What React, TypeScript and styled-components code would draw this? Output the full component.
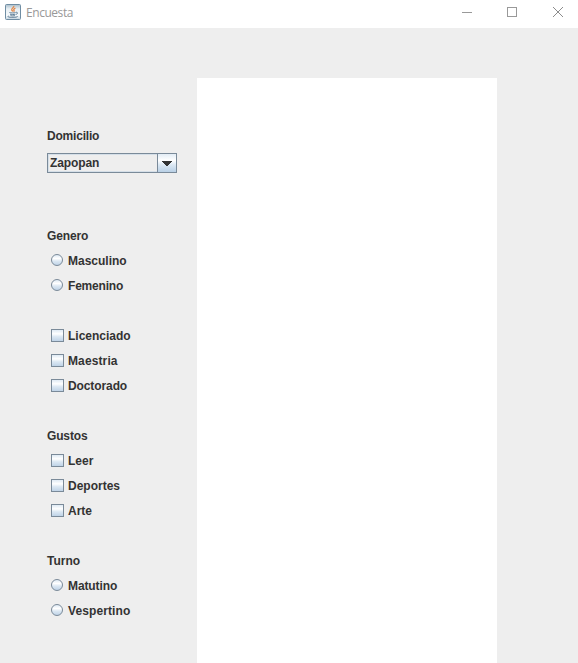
import React from "react";
import styled, { createGlobalStyle } from "styled-components";

const GlobalStyle = createGlobalStyle`
  * { box-sizing: border-box; }
  body { margin: 0; overflow: hidden; background: #eeeeee; }
`;

const Window = styled.div`
  display: flex;
  flex-direction: column;
  width: 578px;
  height: 663px;
  overflow: hidden;
  background: #eeeeee;
  color: #333333;
  font: bold 12px/27px "Liberation Sans", Arial, sans-serif;
`;

const TitleBar = styled.header`
  display: flex;
  flex: none;
  height: 28px;
  padding-left: 5px;
  background: #ffffff;
`;

const Title = styled.h1`
  flex: 1;
  margin: 0 0 0 5px;
  color: #999999;
  font: 400 12px/26px "Open Sans", "Noto Sans", sans-serif;
  letter-spacing: -0.45px;
`;

const AppIcon = styled.svg`
  flex: none;
  width: 16px;
  height: 16px;
  margin-top: 4px;
`;

const Controls = styled.div`
  display: flex;
  gap: 33px;
  padding-right: 14px;
`;

const ControlButton = styled.button`
  display: flex;
  width: 12px;
  height: 28px;
  padding: 6px 0 0;
  border: 0;
  background: none;

  &:last-child {
    margin-left: 1px;
  }
`;

const Content = styled.main`
  display: flex;
  flex: 1;
  min-height: 0;
`;

const Form = styled.form`
  display: flex;
  flex-direction: column;
  gap: 25px;
  width: 197px;
  padding: 95px 20px 0 47px;
`;

const Group = styled.section<{ $height?: number }>`
  height: ${({ $height }) => ($height ? `${$height}px` : "auto")};
`;

const Heading = styled.div<{ $tracking?: number }>`
  height: 25px;
  letter-spacing: ${({ $tracking = 0 }) => $tracking}px;
`;

const Combo = styled.div`
  display: flex;
  width: 130px;
  height: 20px;
  margin-top: 5px;
  border: 1px solid #7a8a99;
`;

const ComboValue = styled.div`
  flex: 1;
  padding-left: 1px;
  border: 1px solid #d5dfe8;
  border-right: 0;
  line-height: 17px;
  letter-spacing: -0.12px;
`;

const ComboArrow = styled.div`
  display: flex;
  width: 19px;
  padding: 7px 0 0 4px;
  border-left: 1px solid #7a8a99;
  background: linear-gradient(#e2ecf5, #ffffff 35%, #dce8f3 60%, #b8cfe5);
`;

const Option = styled.label`
  display: flex;
  height: 25px;
  padding-left: 4px;
`;

const OptionText = styled.span<{ $tracking?: number }>`
  letter-spacing: ${({ $tracking = 0 }) => $tracking}px;
`;

const Mark = styled.span<{ $round?: boolean }>`
  flex: none;
  width: ${({ $round }) => ($round ? 12 : 13)}px;
  height: ${({ $round }) => ($round ? 12 : 13)}px;
  margin: 6px ${({ $round }) => ($round ? 5 : 4)}px 0 0;
  border: 1px solid #7a8a99;
  border-radius: ${({ $round }) => ($round ? "50%" : "0")};
  background: linear-gradient(#dfeaf4, #ffffff 35%, #dce8f3 60%, #bfd3e7);
`;

const OutputPanel = styled.section`
  width: 300px;
  margin-top: 50px;
  background: #ffffff;
`;

interface Choice {
  label: string;
  tracking?: number;
}

interface ChoiceGroupProps {
  title?: Choice;
  options: Choice[];
  round?: boolean;
}

function ChoiceGroup({ title, options, round }: ChoiceGroupProps) {
  return (
    <Group>
      {title && <Heading $tracking={title.tracking}>{title.label}</Heading>}
      {options.map(({ label, tracking }) => (
        <Option key={label}>
          <Mark $round={round} />
          <OptionText $tracking={tracking}>{label}</OptionText>
        </Option>
      ))}
    </Group>
  );
}

function JavaIcon() {
  return (
    <AppIcon viewBox="0 0 16 16">
      <defs>
        <linearGradient id="tile" x1="0" y1="0" x2="0" y2="1">
          <stop offset="0" stopColor="#a9bdca" />
          <stop offset="0.3" stopColor="#e9f0f4" />
          <stop offset="0.75" stopColor="#f4f8fa" />
          <stop offset="1" stopColor="#c3d3de" />
        </linearGradient>
      </defs>
      <rect x="0.5" y="0.5" width="15" height="15" rx="1" fill="url(#tile)" stroke="#6f8da3" />
      <path d="M8.8 2c.5 1.6-2.8 2.3-2 4.1.2.5.8.8 1 1.4M10.4 4.2C8.6 5 8.5 5.6 9 6.4c.3.5.1.9-.2 1.2" fill="none" stroke="#e38544" strokeWidth="1.3" />
      <path d="M4.4 8.5c1.4.6 4.8.6 6.1 0M5 10.2c1.3.5 4.1.5 5.2 0M10.8 8.3c2.3-.5 2.2 1.7-.1 2.2M3.4 11.9c-2 .9 1.7 1.6 4.4 1.5 2.7 0 5.6-.6 4.5-1.4M5.4 11.7c1.2.3 3.4.3 4.6 0" fill="none" stroke="#54738c" strokeWidth="0.9" />
    </AppIcon>
  );
}

export default function App() {
  return (
    <>
      <GlobalStyle />
      <Window>
        <TitleBar>
          <JavaIcon />
          <Title>Encuesta</Title>
          <Controls>
            <ControlButton aria-label="Minimizar">
              <svg width="12" height="12" viewBox="0 0 12 12" stroke="#999999">
                <path d="M1 6.5h10" />
              </svg>
            </ControlButton>
            <ControlButton aria-label="Maximizar">
              <svg width="12" height="12" viewBox="0 0 12 12" fill="none" stroke="#999999">
                <rect x="1.5" y="1.5" width="9" height="9" />
              </svg>
            </ControlButton>
            <ControlButton aria-label="Cerrar">
              <svg width="12" height="12" viewBox="0 0 12 12" stroke="#8c8c8c">
                <path d="M1 1l10 10M11 1L1 11" />
              </svg>
            </ControlButton>
          </Controls>
        </TitleBar>
        <Content>
          <Form>
            <Group $height={75}>
              <Heading $tracking={-0.2}>Domicilio</Heading>
              <Combo>
                <ComboValue>Zapopan</ComboValue>
                <ComboArrow>
                  <svg width="10" height="5" viewBox="0 0 10 5" fill="#333333">
                    <path d="M0 0h10v1H9v1H8v1H7v1H6v1H4V4H3V3H2V2H1V1H0z" />
                  </svg>
                </ComboArrow>
              </Combo>
            </Group>
            <ChoiceGroup
              title={{ label: "Genero", tracking: -0.15 }}
              options={[{ label: "Masculino" }, { label: "Femenino", tracking: -0.2 }]}
              round
            />
            <ChoiceGroup
              options={[
                { label: "Licenciado" },
                { label: "Maestria", tracking: 0.12 },
                { label: "Doctorado", tracking: -0.1 },
              ]}
            />
            <ChoiceGroup
              title={{ label: "Gustos", tracking: -0.15 }}
              options={[{ label: "Leer" }, { label: "Deportes" }, { label: "Arte" }]}
            />
            <ChoiceGroup
              title={{ label: "Turno" }}
              options={[
                { label: "Matutino", tracking: -0.1 },
                { label: "Vespertino", tracking: 0.1 },
              ]}
              round
            />
          </Form>
          <OutputPanel />
        </Content>
      </Window>
    </>
  );
}
